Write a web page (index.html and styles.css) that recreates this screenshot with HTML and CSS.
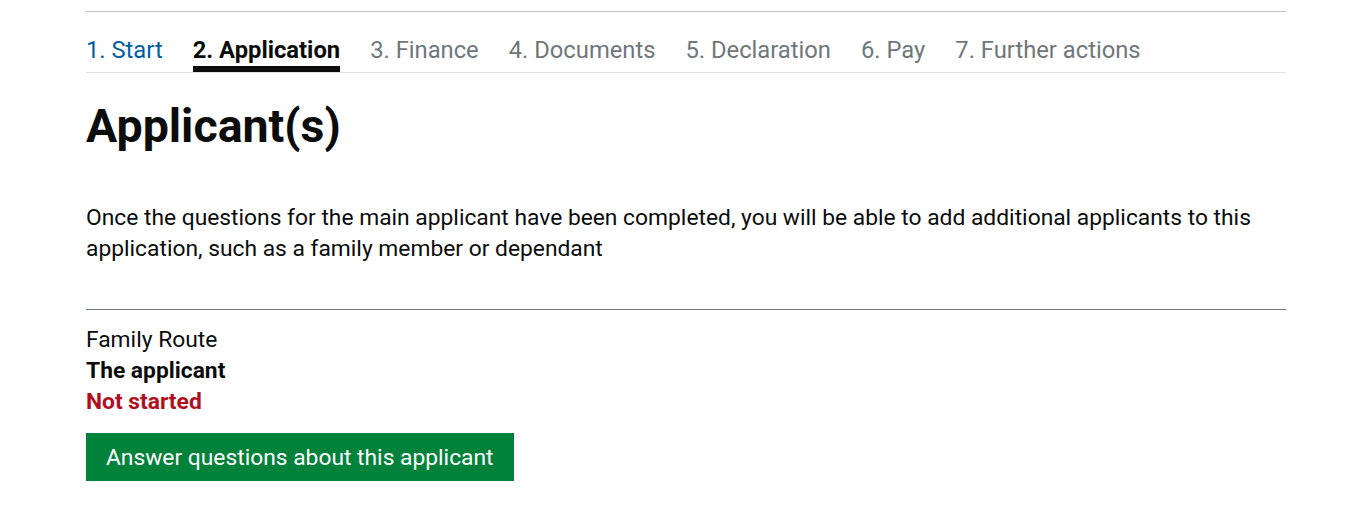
FILE: index.html
```html
<!DOCTYPE html>
<html lang="en">
<head>
<meta charset="utf-8">
<title>Applicant(s)</title>
<link rel="stylesheet" href="styles.css">
</head>
<body>
<div class="page">
  <nav class="steps">
    <ul class="steps__list">
      <li class="steps__item steps__item--done"><a href="#">1. Start</a></li>
      <li class="steps__item steps__item--current">2. Application</li>
      <li class="steps__item">3. Finance</li>
      <li class="steps__item">4. Documents</li>
      <li class="steps__item">5. Declaration</li>
      <li class="steps__item">6. Pay</li>
      <li class="steps__item">7. Further actions</li>
    </ul>
  </nav>
  <main class="main">
    <h1 class="heading">Applicant(s)</h1>
    <p class="body">Once the questions for the main applicant have been completed, you will be able to add additional applicants to this application, such as a family member or dependant</p>
    <div class="applicant">
      <div class="applicant__route">Family Route</div>
      <div class="applicant__name">The applicant</div>
      <div class="applicant__status">Not started</div>
      <a class="button" href="#">Answer questions about this applicant</a>
    </div>
  </main>
</div>
</body>
</html>
```
FILE: styles.css
```css
html, body {
  margin: 0;
  padding: 0;
  background: #ffffff;
}
body {
  font-family: Roboto, "Liberation Sans", Arial, sans-serif;
  color: #0b0c0c;
}
.page {
  width: 1200px;
  margin-left: 86px;
  padding-top: 11px;
}
.steps {
  border-top: 1px solid #bfc1c3;
}
.steps__list {
  list-style: none;
  margin: 0;
  padding: 0;
  display: flex;
  gap: 30px;
  border-bottom: 1px solid #dee0e2;
}
.steps__item {
  font-size: 23.75px;
  line-height: 25px;
  padding-top: 26px;
  padding-bottom: 3px;
  border-bottom: 6px solid transparent;
  color: #6f777b;
}
.steps__item a {
  color: #005ea5;
  text-decoration: none;
}
.steps__item--current {
  color: #0b0c0c;
  font-weight: 700;
  border-bottom-color: #0b0c0c;
}
.main {
  padding-top: 28px;
}
.heading {
  margin: 0;
  font-size: 46.5px;
  line-height: 50px;
  font-weight: 700;
}
.body {
  margin: 51px 0 0;
  font-size: 22.8px;
  line-height: 31.25px;
}
.applicant {
  margin-top: 44px;
  border-top: 1px solid #6f777b;
  padding-top: 14px;
  font-size: 22.8px;
  line-height: 31px;
}
.applicant__name {
  font-weight: 700;
}
.applicant__status {
  font-weight: 700;
  color: #b10e1e;
}
.button {
  display: inline-block;
  margin-top: 16px;
  background: #00823b;
  color: #ffffff;
  text-decoration: none;
  font-size: 22.8px;
  line-height: 25px;
  padding: 12px 20px 11px;
  box-shadow: 0 2.5px 0 #003618;
}
```
